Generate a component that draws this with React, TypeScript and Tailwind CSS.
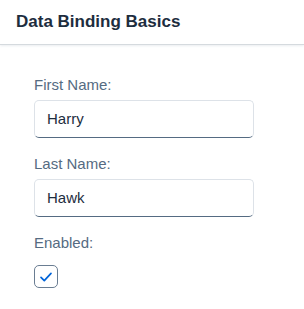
export default function App() {
  return (
    <div className="w-[304px] h-[309px] bg-white font-['Liberation_Sans',Arial,sans-serif] overflow-hidden">
      <div className="h-[45px] flex items-center pl-4 border-b border-[#d5dade] shadow-[0_1px_2px_rgba(91,115,139,0.12)]">
        <h1 className="text-[17px] font-bold text-[#1d2d3e]">Data Binding Basics</h1>
      </div>
      <div className="pl-[34px] pt-[30px] w-[254px]">
        <Field label="First Name:" value="Harry" />
        <Field label="Last Name:" value="Hawk" />
        <label className="block text-[15px] leading-5 text-[#556b82]">Enabled:</label>
        <div className="mt-[12px] w-[24px] h-[23px] rounded-[5px] border border-[#6a7d92] flex items-center justify-center">
          <svg width="14" height="12" viewBox="0 0 14 12" fill="none">
            <path d="M2 6.3 L5.3 9.6 L12 2.4" stroke="#0064d9" strokeWidth="1.7" strokeLinecap="round" strokeLinejoin="round" />
          </svg>
        </div>
      </div>
    </div>
  );
}

function Field({ label, value }: { label: string; value: string }) {
  return (
    <div className="mb-[16px]">
      <label className="block text-[15px] leading-5 text-[#556b82]">{label}</label>
      <div className="mt-[5px] h-[38px] rounded-[5px] border border-[#dde2e8] border-b-[#556b82] flex items-center px-3 text-[15px] text-[#1d2d3e]">
        {value}
      </div>
    </div>
  );
}
